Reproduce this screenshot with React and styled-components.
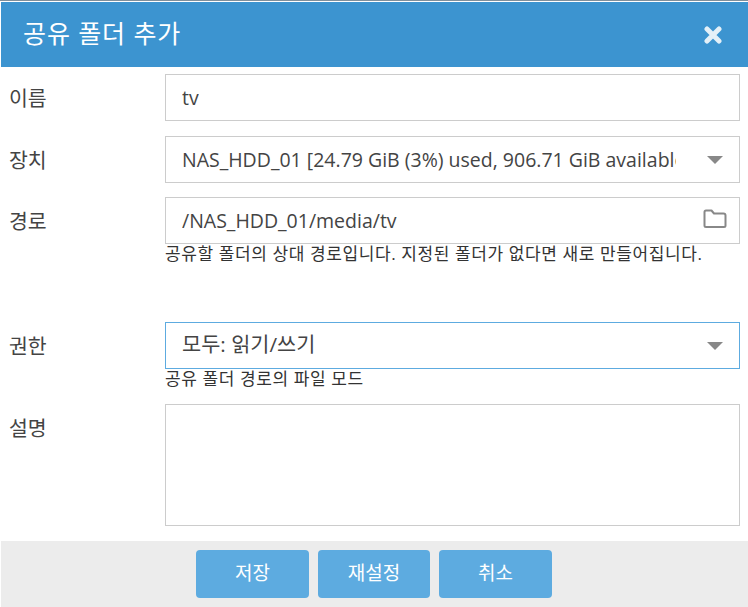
import React from 'react';
import styled, { createGlobalStyle } from 'styled-components';

const GlobalStyle = createGlobalStyle`
  html, body {
    margin: 0;
    padding: 0;
    background: #fff;
  }
  * { box-sizing: border-box; }
`;

const Dialog = styled.div`
  width: 748px;
  height: 607px;
  display: flex;
  flex-direction: column;
  padding: 1px 0 0 1px;
  border-top: 1px solid #7f8f9c;
  overflow: hidden;
  font-family: "Open Sans", "Noto Sans CJK KR", sans-serif;
  color: #444;
`;

const Header = styled.div`
  height: 65px;
  flex: none;
  display: flex;
  align-items: center;
  justify-content: space-between;
  padding: 0 26px 0 22px;
  background: #3c94d0;
  color: #fff;
  font-size: 25px;
`;

const Title = styled.div`
  letter-spacing: 0.9px;
  margin-bottom: 5px;
`;

const Form = styled.div`
  flex: 1;
  display: flex;
  flex-direction: column;
  padding: 7px 8px 0 8px;
`;

const Row = styled.div`
  display: grid;
  grid-template-columns: 156px 575px;
  margin-bottom: ${props => props.$gap || 0}px;
`;

const Label = styled.div`
  font-size: 20.5px;
  line-height: 24px;
  padding-top: 12px;
`;

const Field = styled.div`
  height: ${props => props.$height || 47}px;
  border: 1px solid ${props => props.$active ? '#5dabe0' : '#ccc'};
  background: #fff;
  display: flex;
  align-items: center;
  justify-content: space-between;
  padding: 0 12px 0 16px;
  font-size: ${props => props.$size || 19.5}px;
`;

const FieldText = styled.div`
  width: ${props => props.$width || 'auto'};
  margin-bottom: ${props => props.$lift || 0}px;
  overflow: hidden;
  white-space: nowrap;
`;

const Caret = styled.div`
  width: 0;
  height: 0;
  margin-right: 4px;
  border-left: 8px solid transparent;
  border-right: 8px solid transparent;
  border-top: 8px solid #888;
`;

const Folder = styled.svg`
  margin-bottom: 4px;
`;

const Hint = styled.div`
  font-size: 17px;
  letter-spacing: 0.6px;
  line-height: 20px;
  color: #333;
`;

const Footer = styled.div`
  height: 66px;
  flex: none;
  display: flex;
  justify-content: center;
  align-items: center;
  gap: 9px;
  background: #ececec;
  padding-right: 1px;
`;

const Button = styled.button`
  width: ${props => props.$width}px;
  height: 48px;
  border: none;
  border-radius: 4px;
  padding: 0 0 4px;
  background: #5dabe0;
  color: #fff;
  font-family: inherit;
  font-size: 19px;
  cursor: pointer;
`;

const CloseIcon = () => (
  <svg width="18" height="18" viewBox="0 0 18 18">
    <path d="M3 3 L15 15 M15 3 L3 15" stroke="#e4f0f8" strokeWidth="5" strokeLinecap="round" />
  </svg>
);

const FolderIcon = () => (
  <Folder width="24" height="20" viewBox="0 0 24 20" fill="none">
    <path
      d="M1.5 16.5 V3 Q1.5 1.5 3 1.5 H8.5 L11 4.5 H20.5 Q22.5 4.5 22.5 6.5 V16.5 Q22.5 18 21 18 H3 Q1.5 18 1.5 16.5 Z"
      stroke="#888"
      strokeWidth="2"
      strokeLinejoin="round"
    />
  </Folder>
);

const App = () => {
  return (
    <>
      <GlobalStyle />
      <Dialog>
        <Header>
          <Title>공유 폴더 추가</Title>
          <CloseIcon />
        </Header>
        <Form>
          <Row $gap={15}>
            <Label>이름</Label>
            <Field><FieldText>tv</FieldText></Field>
          </Row>
          <Row $gap={14}>
            <Label>장치</Label>
            <Field>
              <FieldText $width="494px">NAS_HDD_01 [24.79 GiB (3%) used, 906.71 GiB available]</FieldText>
              <Caret />
            </Field>
          </Row>
          <Row>
            <Label>경로</Label>
            <Field>
              <FieldText>/NAS_HDD_01/media/tv</FieldText>
              <FolderIcon />
            </Field>
          </Row>
          <Row $gap={58}>
            <div />
            <Hint>공유할 폴더의 상대 경로입니다. 지정된 폴더가 없다면 새로 만들어집니다.</Hint>
          </Row>
          <Row>
            <Label>권한</Label>
            <Field $active $size={20.8}>
              <FieldText $lift={5}>모두: 읽기/쓰기</FieldText>
              <Caret />
            </Field>
          </Row>
          <Row $gap={15}>
            <div />
            <Hint>공유 폴더 경로의 파일 모드</Hint>
          </Row>
          <Row>
            <Label>설명</Label>
            <Field $height={122} />
          </Row>
        </Form>
        <Footer>
          <Button $width={113}>저장</Button>
          <Button $width={112}>재설정</Button>
          <Button $width={113}>취소</Button>
        </Footer>
      </Dialog>
    </>
  );
};

export default App;
